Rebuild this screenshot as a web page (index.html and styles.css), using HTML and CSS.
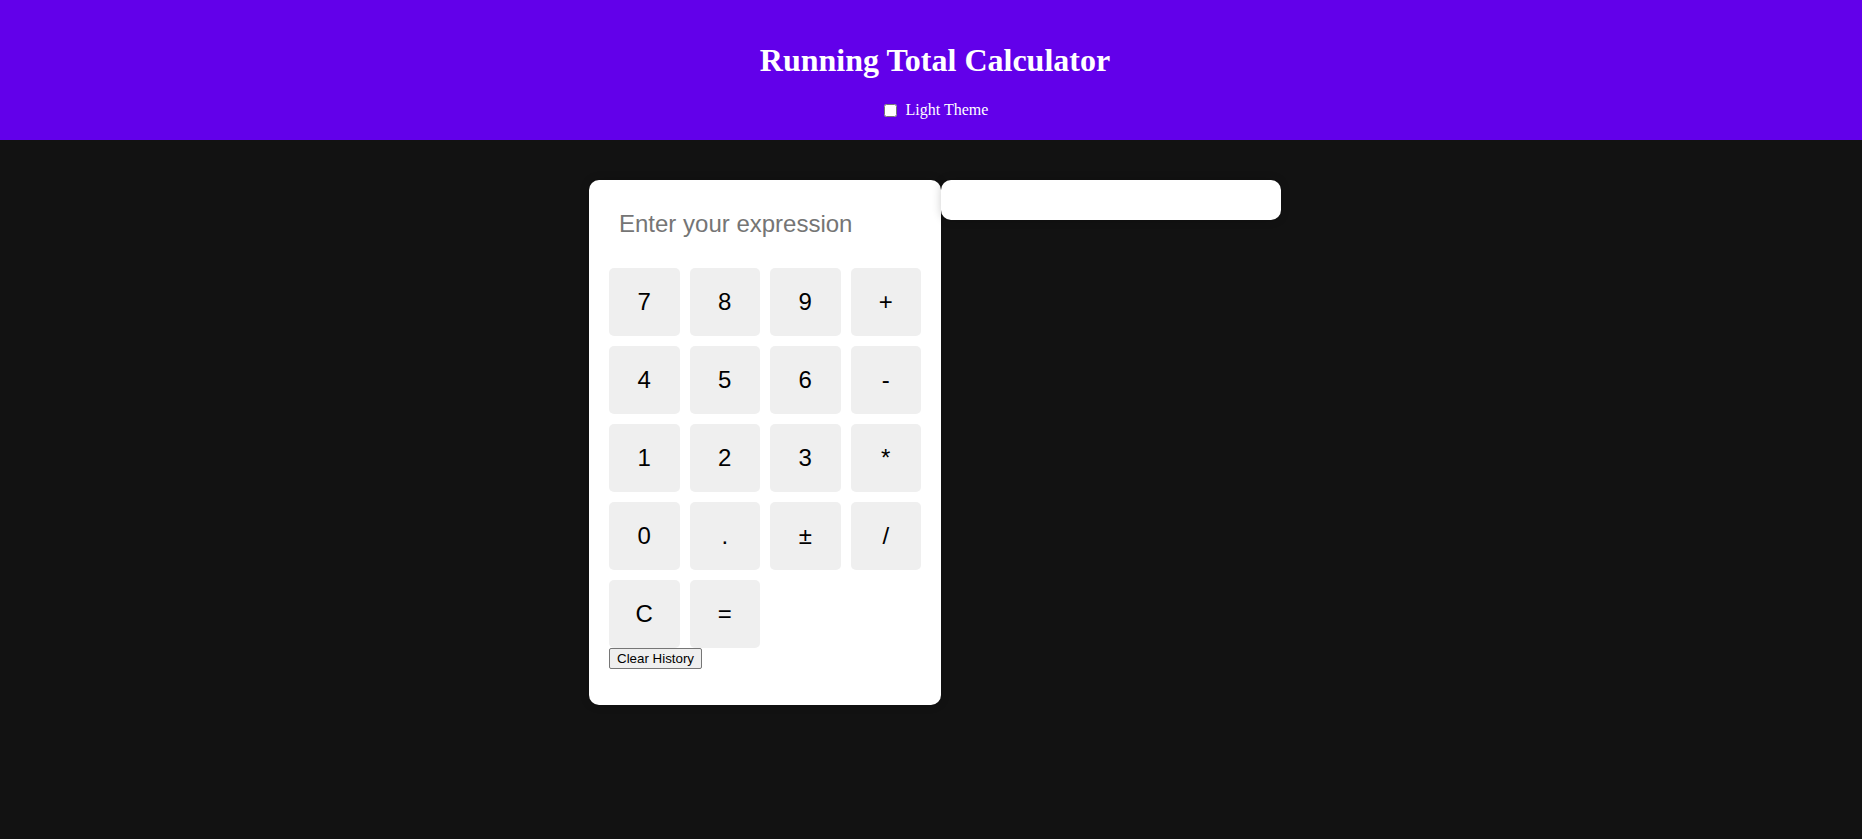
FILE: index.html
```html
<!DOCTYPE html>
<html>
<head>
<meta charset="utf-8">
<title>Running Total Calculator</title>
<link rel="stylesheet" href="styles.css">
</head>
<body>
<header class="header">
  <h1 class="title">Running Total Calculator</h1>
  <label class="theme-toggle"><input type="checkbox" class="theme-check"> Light Theme</label>
</header>
<main class="main">
  <section class="calculator">
    <input type="text" class="display" placeholder="Enter your expression">
    <div class="keys">
      <button class="key">7</button>
      <button class="key">8</button>
      <button class="key">9</button>
      <button class="key">+</button>
      <button class="key">4</button>
      <button class="key">5</button>
      <button class="key">6</button>
      <button class="key">-</button>
      <button class="key">1</button>
      <button class="key">2</button>
      <button class="key">3</button>
      <button class="key">*</button>
      <button class="key">0</button>
      <button class="key">.</button>
      <button class="key">±</button>
      <button class="key">/</button>
      <button class="key">C</button>
      <button class="key">=</button>
    </div>
    <button class="clear-history">Clear History</button>
  </section>
  <section class="history"></section>
</main>
</body>
</html>
```
FILE: styles.css
```css
html, body {
  margin: 0;
  padding: 0;
}
body {
  background: #121212;
  font-family: "Liberation Serif", "Times New Roman", serif;
  min-height: 100vh;
}
.header {
  background: #6200ea;
  color: #ffffff;
  text-align: center;
  padding: 21px 20px 20px 28px;
}
.title {
  font-size: 32px;
  font-weight: bold;
  margin: 21px 0 22px;
  line-height: 37px;
}
.theme-toggle {
  font-size: 16px;
  line-height: 18px;
  display: inline-block;
}
.theme-check {
  width: 13px;
  height: 13px;
  margin: 3px 5px 3px 2px;
  vertical-align: -2px;
}
.main {
  display: flex;
  justify-content: center;
  align-items: flex-start;
  padding: 40px 0 0 8px;
}
.calculator {
  background: #ffffff;
  width: 312px;
  padding: 20px 20px 36px;
  border-radius: 10px;
  box-shadow: 0 0 10px rgba(0, 0, 0, 0.2);
}
.display {
  display: block;
  box-sizing: border-box;
  width: 100%;
  height: 48px;
  padding: 10px;
  border: none;
  outline: none;
  font-family: "Liberation Sans", Arial, sans-serif;
  font-size: 24px;
  color: #000;
  margin: 0 0 20px;
  background: #fff;
}
.display::placeholder {
  color: #757575;
}
.keys {
  display: grid;
  grid-template-columns: repeat(4, 1fr);
  gap: 10px;
}
.key {
  height: 68px;
  border: none;
  border-radius: 5px;
  background: #efefef;
  font-family: "Liberation Sans", Arial, sans-serif;
  font-size: 24px;
  color: #000;
  padding: 0;
}
.clear-history {
  display: block;
  font-family: "Liberation Sans", Arial, sans-serif;
  font-size: 13.333px;
  height: 21px;
  padding: 1px 7px;
  border: 1px solid #767676;
  border-radius: 2px;
  background: #efefef;
  color: #000;
}
.history {
  background: #ffffff;
  width: 300px;
  padding: 20px;
  border-radius: 10px;
  box-shadow: 0 0 10px rgba(0, 0, 0, 0.2);
}
```
